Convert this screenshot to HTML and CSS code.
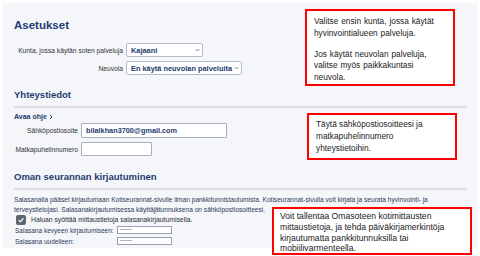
FILE: index.html
```html
<!DOCTYPE html>
<html lang="fi">
<head>
<meta charset="utf-8">
<link rel="stylesheet" href="styles.css">
</head>
<body>
<div class="panel">
  <section class="sec sec-settings">
    <h1 class="title">Asetukset</h1>
    <div class="form-grid settings-grid">
      <label class="lbl">Kunta, jossa käytän soten palveluja</label>
      <div class="select select-kunta"><span>Kajaani</span><svg class="chev" viewBox="0 0 6 4" width="5" height="4"><path d="M1 1 L3 3 L5 1" fill="none" stroke="#3b4a6b" stroke-width="0.9"/></svg></div>
      <label class="lbl">Neuvola</label>
      <div class="select select-neuvola"><span>En käytä neuvolan palveluita</span><svg class="chev" viewBox="0 0 6 4" width="5" height="4"><path d="M1 1 L3 3 L5 1" fill="none" stroke="#3b4a6b" stroke-width="0.9"/></svg></div>
    </div>
  </section>

  <section class="sec sec-contact">
    <h2 class="heading">Yhteystiedot</h2>
    <div class="help">Avaa ohje <svg viewBox="0 0 4 6" width="4" height="6"><path d="M1 1 L3 3 L1 5" fill="none" stroke="#1f3b6f" stroke-width="1"/></svg></div>
    <div class="form-grid contact-grid">
      <label class="lbl">Sähköpostiosoite</label>
      <div class="input input-email">bilalkhan3700@gmail.com</div>
      <label class="lbl">Matkapuhelinnumero</label>
      <div class="input input-phone"></div>
    </div>
  </section>

  <section class="sec sec-login">
    <h2 class="heading">Oman seurannan kirjautuminen</h2>
    <p class="info">Salasanalla pääset kirjautumaan Kotiseurannat-sivulle ilman pankkitunnistautumista. Kotiseurannat-sivulla voit kirjata ja seurata hyvinvointi- ja terveystietojasi. Salasanakirjautumisessa käyttäjätunnuksena on sähköpostiosoitteesi.</p>
    <div class="check-row">
      <span class="checkbox"><svg viewBox="0 0 10 10" width="8" height="8"><path d="M2 5.2 L4.2 7.3 L8 2.8" fill="none" stroke="#fff" stroke-width="1.5"/></svg></span>
      <span class="check-label">Haluan syöttää mittaustietoja salasanakirjautumisella.</span>
    </div>
    <div class="pw-grid">
      <span class="pw-label">Salasana kevyeen kirjautumiseen:</span>
      <span class="pw-input">•••••••••</span>
      <span class="pw-label">Salasana uudelleen:</span>
      <span class="pw-input">•••••••••</span>
    </div>
  </section>
</div>

<div class="note note-1">
  <p>Valitse ensin kunta, jossa käytät hyvinvointialueen palveluja.</p>
  <p>Jos käytät neuvolan palveluja, valitse myös paikkakuntasi neuvola.</p>
</div>
<div class="note note-2">
  <p>Täytä sähköpostiosoitteesi ja matkapuhelinnumero yhteystietoihin.</p>
</div>
<div class="note note-3">
  <p>Voit tallentaa Omasoteen kotimittausten mittaustietoja, ja tehda päiväkirjamerkintöja kirjautumatta pankkitunnuksilla tai mobiilivarmenteella.</p>
</div>
</body>
</html>
```
FILE: styles.css
```css
html, body {
  margin: 0;
  padding: 0;
}
body {
  position: relative;
  width: 480px;
  height: 256px;
  overflow: hidden;
  background: #ffffff;
  font-family: "Liberation Sans", Arial, sans-serif;
  color: #2b2f38;
}
.panel {
  margin: 3px;
  height: 245px;
  background: #f4f6fa;
  padding: 15px 10px 0 11px;
  box-sizing: border-box;
  overflow: hidden;
}
.title {
  margin: 0;
  font-size: 11.5px;
  line-height: 14px;
  font-weight: bold;
  color: #1f3b6f;
}
.form-grid {
  display: grid;
  align-items: center;
  column-gap: 3px;
}
.settings-grid {
  grid-template-columns: 109px auto;
  row-gap: 4px;
  margin-top: 11px;
  justify-items: start;
}
.lbl {
  justify-self: end;
  font-size: 6.7px;
  color: #333;
}
.select {
  box-sizing: border-box;
  height: 14px;
  background: #fff;
  border: 1px solid #b4bccb;
  border-radius: 2px;
  display: flex;
  align-items: center;
  justify-content: space-between;
  padding: 0 2px 0 4px;
  font-size: 7.4px;
  font-weight: bold;
  color: #1f3b6f;
}
.select-kunta { width: 77px; }
.select-neuvola { width: 116px; }
.chev { flex: none; }

.sec-contact { margin-top: 14px; }
.heading {
  margin: 0;
  font-size: 9.5px;
  line-height: 12px;
  font-weight: bold;
  color: #1f3b6f;
  padding-bottom: 5px;
  border-bottom: 2px solid #dcdee3;
}
.help {
  margin-top: 5px;
  font-size: 7px;
  font-weight: bold;
  color: #1f3b6f;
  display: flex;
  align-items: center;
  gap: 2px;
}
.contact-grid {
  grid-template-columns: 64px auto;
  row-gap: 4px;
  margin-top: 3px;
  justify-items: start;
}
.input {
  box-sizing: border-box;
  height: 15px;
  background: #fff;
  border: 1px solid #a9b1bf;
  border-radius: 1px;
  padding: 0 4px;
  display: flex;
  align-items: center;
  font-size: 7.3px;
  font-weight: bold;
  color: #1f3b6f;
}
.input-email { width: 146px; }
.input-phone { width: 71px; height: 14px; }

.sec-login { margin-top: 15px; }
.info {
  margin: 5px 0 0 0;
  font-size: 6.6px;
  line-height: 10px;
  color: #2e3a55;
  padding-right: 30px;
}
.check-row {
  display: flex;
  align-items: center;
  gap: 5px;
  margin-top: -1px;
  padding-left: 2px;
  height: 11px;
}
.checkbox {
  width: 10px;
  height: 10px;
  border-radius: 2px;
  background: #5f6570;
  display: flex;
  align-items: center;
  justify-content: center;
}
.check-label {
  font-size: 6.8px;
  color: #2b2f38;
}
.pw-grid {
  display: grid;
  grid-template-columns: 102px 55px;
  row-gap: 3px;
  align-items: center;
  margin-top: 1px;
  padding-left: 1px;
}
.pw-label {
  font-size: 6.5px;
  color: #2e3a55;
}
.pw-input {
  box-sizing: border-box;
  height: 8px;
  background: #fff;
  border: 1px solid #9aa2b0;
  font-size: 3px;
  line-height: 6px;
  padding-left: 2px;
  color: #333;
  letter-spacing: 0.3px;
}

.note {
  position: absolute;
  box-sizing: border-box;
  background: #fff;
  border: 2px solid #f00;
  color: #222;
}
.note p { margin: 0; }
.note-1 {
  left: 305px;
  top: 9px;
  width: 150px;
  height: 77px;
  padding: 5px 12px 0 7px;
  font-size: 8.3px;
  line-height: 11.8px;
  word-spacing: 0.6px;
}
.note-1 p + p { margin-top: 9px; }
.note-2 {
  left: 307px;
  top: 113px;
  width: 150px;
  height: 47px;
  padding: 4px 6px 0 7px;
  font-size: 8.3px;
  line-height: 11.8px;
}
.note-3 {
  left: 272px;
  top: 207px;
  width: 200px;
  height: 48px;
  padding: 2px 6px 0 6px;
  font-size: 8.6px;
  line-height: 10.8px;
}
```
